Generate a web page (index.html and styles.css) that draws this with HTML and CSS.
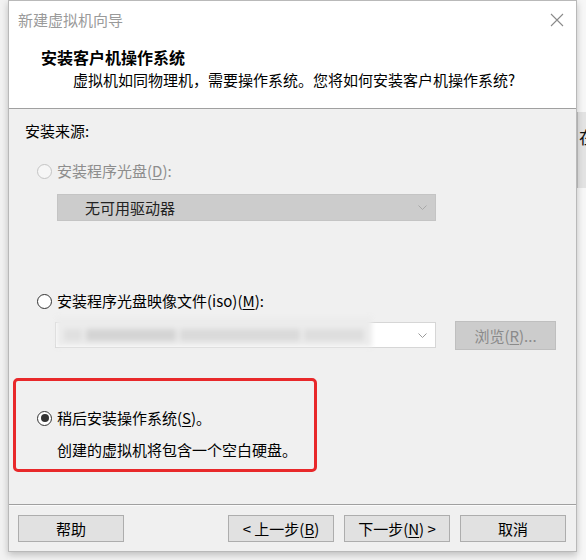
FILE: index.html
```html
<!DOCTYPE html>
<html lang="zh-CN">
<head>
<meta charset="utf-8">
<title>新建虚拟机向导</title>
<link rel="stylesheet" href="styles.css">
</head>
<body>
<div class="screen">
  <div class="left-strip"></div>
  <div class="dialog">
    <div class="titlebar">
      <span class="title">新建虚拟机向导</span>
      <svg class="close" width="14" height="14" viewBox="0 0 14 14"><path d="M1 1 L13 13 M13 1 L1 13" stroke="#8a8a8a" stroke-width="1.1" fill="none"/></svg>
    </div>
    <div class="header">
      <div class="h-title">安装客户机操作系统</div>
      <div class="h-sub">虚拟机如同物理机，需要操作系统。您将如何安装客户机操作系统?</div>
    </div>
    <div class="content">
      <div class="src-label">安装来源:</div>
      <div class="option opt-cd disabled"><span class="radio"></span><span>安装程序光盘(<u>D</u>):</span></div>
      <div class="select disabled">
        <span class="select-text">无可用驱动器</span>
        <svg class="chev" width="9" height="5" viewBox="0 0 9 5"><path d="M0.5 0.5 L4.5 4.5 L8.5 0.5" stroke="#a8a8a8" fill="none"/></svg>
      </div>
      <div class="option opt-iso"><span class="radio"></span><span>安装程序光盘映像文件(iso)(<u>M</u>):</span></div>
      <div class="iso-row">
        <div class="combo">
          <div class="blurred">
            <span class="b1"></span><span class="b2"></span><span class="b3"></span><span class="b4"></span>
          </div>
          <svg class="chev" width="9" height="5" viewBox="0 0 9 5"><path d="M0.5 0.5 L4.5 4.5 L8.5 0.5" stroke="#9a9a9a" fill="none"/></svg>
        </div>
        <div class="btn btn-disabled">浏览(<u>R</u>)...</div>
      </div>
      <div class="later-box">
        <div class="option"><span class="radio checked"></span><span>稍后安装操作系统(<u>S</u>)。</span></div>
        <div class="note">创建的虚拟机将包含一个空白硬盘。</div>
      </div>
    </div>
    <div class="footer">
      <div class="btn">帮助</div>
      <div class="spacer"></div>
      <div class="btn">&lt; 上一步(<u>B</u>)</div>
      <div class="btn">下一步(<u>N</u>) &gt;</div>
      <div class="btn">取消</div>
    </div>
  </div>
  <div class="right-strip"><div class="bg-app"><span class="bg-char">在</span></div></div>
</div>
</body>
</html>
```

FILE: styles.css
```css
* { box-sizing: border-box; }
html, body { margin: 0; padding: 0; }
body {
  width: 586px;
  height: 560px;
  overflow: hidden;
  background: #f4f4f4;
  font-family: "Noto Sans CJK SC", "Noto Sans", sans-serif;
  font-size: 15px;
  color: #000;
}
.screen {
  display: flex;
  align-items: flex-start;
  height: 560px;
}
.left-strip {
  width: 8px;
  height: 560px;
  background: #f2f2f2;
  flex: none;
}
.dialog {
  width: 569px;
  flex: none;
  border: 1px solid #b9b9b9;
  background: #f0f0f0;
  box-shadow: 0 3px 7px rgba(0,0,0,0.22);
  position: relative;
  z-index: 1;
}
.titlebar {
  height: 38px;
  background: #fff;
  display: flex;
  align-items: center;
  justify-content: space-between;
  padding: 0 12px 0 9px;
}
.title {
  color: #9a9a9a;
  font-size: 15px;
  line-height: 20px;
}
.close { display: block; margin-top: -1px; }
.header {
  background: #fff;
  height: 70px;
  padding-top: 8px;
  border-bottom: 1px solid #a0a0a0;
}
.h-title {
  font-weight: bold;
  font-size: 16px;
  line-height: 20px;
  padding-left: 32px;
}
.h-sub {
  margin-top: 3px;
  line-height: 20px;
  padding-left: 64px;
  font-size: 15px;
}
.content {
  height: 395px;
  padding-top: 12px;
  display: flex;
  flex-direction: column;
  align-items: flex-start;
}
.src-label {
  line-height: 20px;
  padding-left: 16px;
}
.option {
  display: flex;
  align-items: center;
  line-height: 20px;
  height: 20px;
}
.opt-cd { margin-top: 20px; padding-left: 28px; }
.opt-iso { margin-top: 70px; padding-left: 28px; }
.option.disabled { color: #8d8d8d; }
.radio {
  width: 15px;
  height: 15px;
  border-radius: 50%;
  border: 1px solid #333;
  background: #fff;
  margin-right: 5px;
  flex: none;
  display: flex;
  align-items: center;
  justify-content: center;
}
.disabled .radio {
  border-color: #c4c4c4;
  background: #f6f6f6;
}
.radio.checked::after {
  content: "";
  width: 8px;
  height: 8px;
  border-radius: 50%;
  background: #333;
}
u { text-underline-offset: 2px; }
.select {
  margin-top: 13px;
  margin-left: 48px;
  width: 379px;
  height: 27px;
  background: #cccccc;
  border: 1px solid #c4c4c4;
  display: flex;
  align-items: center;
  justify-content: space-between;
  padding: 0 8px 0 27px;
}
.select-text { color: #222; line-height: 20px; }
.iso-row {
  margin-top: 10px;
  display: flex;
  align-items: flex-start;
}
.combo {
  margin-top: 1px;
  margin-left: 46px;
  width: 381px;
  height: 26px;
  background: #fff;
  border: 1px solid #d6d6d6;
  display: flex;
  align-items: center;
  justify-content: space-between;
  padding-right: 8px;
}
.blurred {
  width: 316px;
  height: 30px;
  margin-top: -6px;
  background: #ececec;
  filter: blur(2.5px);
  display: flex;
  align-items: flex-end;
  padding: 0 0 6px 8px;
  gap: 4px;
}
.blurred span { display: block; height: 12px; }
.b1 { width: 18px; background: #e0e0e0; }
.b2 { width: 90px; background: #d4d4d4; }
.b3 { width: 120px; background: #dadada; }
.b4 { width: 60px; background: #dedede; }
.btn {
  width: 106px;
  height: 27px;
  background: #e1e1e1;
  border: 1px solid #adadad;
  display: flex;
  align-items: center;
  justify-content: center;
  line-height: 20px;
  font-size: 15px;
  flex: none;
}
.btn.btn-disabled {
  margin-left: 19px;
  width: 101px;
  height: 29px;
  background: #cccccc;
  border-color: #bfbfbf;
  color: #8a8a8a;
}
.later-box {
  margin-top: 28px;
  margin-left: 4px;
  width: 304px;
  height: 94px;
  border: 3px solid #e8282a;
  border-radius: 5px;
  padding: 27px 0 0 21px;
}
.note {
  margin-top: 12px;
  line-height: 20px;
  padding-left: 20px;
}
.footer {
  border-top: 1px solid #a0a0a0;
  box-shadow: inset 0 1px 0 #fbfbfb;
  height: 47px;
  padding: 10px 10px 0 9px;
  display: flex;
  align-items: flex-start;
  gap: 10px;
}
.footer .spacer { flex: 1; }
.right-strip {
  width: 9px;
  height: 560px;
  flex: none;
  background: #f7f7f7;
  overflow: hidden;
  padding-top: 112px;
}
.bg-app {
  height: 76px;
  background: #e3e3e3;
  border-left: 1px solid #c2c2c2;
  padding-top: 14px;
}
.bg-char {
  display: block;
  font-size: 17px;
  line-height: 22px;
  margin-left: 1px;
  color: #111;
  white-space: nowrap;
}
```
